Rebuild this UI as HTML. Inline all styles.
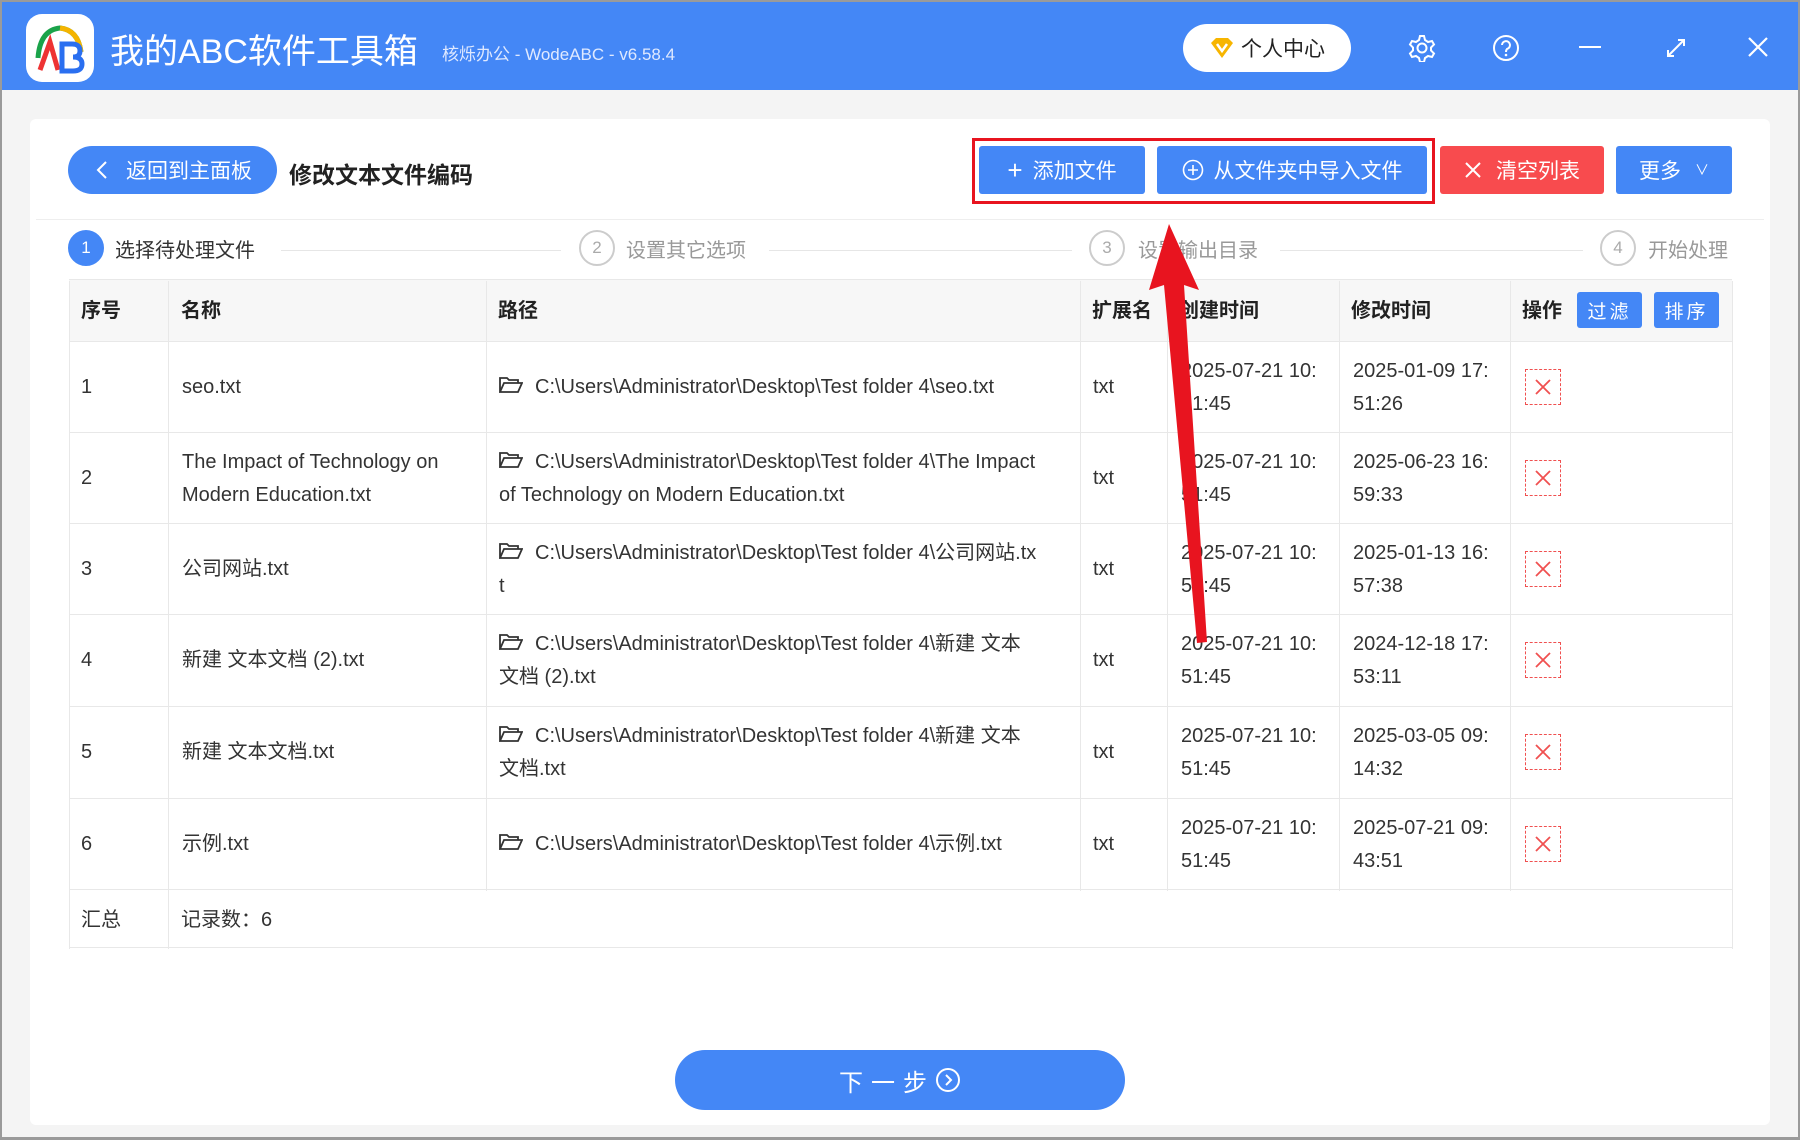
<!DOCTYPE html>
<html><head><meta charset="utf-8"><style>
*{margin:0;padding:0;box-sizing:border-box}
body{width:1800px;height:1140px;overflow:hidden;background:#9a9a9a;font-family:"Liberation Sans","Noto Sans CJK SC",sans-serif;position:relative}
.win{position:absolute;left:2px;top:2px;width:1796px;height:1135px;background:#f4f4f4}
.hdr{position:absolute;left:0;top:0;width:1796px;height:88px;background:#4487f6}
.a{position:absolute}
.card{position:absolute;left:28px;top:117px;width:1740px;height:1006px;background:#fff;border-radius:6px}
.btn{position:absolute;color:#fff;font-size:21px;display:flex;align-items:center;justify-content:center;border-radius:3px}
.blue{background:#4487f6}
.circ{position:absolute;width:36px;height:36px;border-radius:50%;border:2px solid #ccc;color:#aaa;font-size:17px;display:flex;align-items:center;justify-content:center}
.st{position:absolute;font-size:20px;color:#999;top:232px}
.ln{position:absolute;height:1px;background:#e6e6e6;top:248px}
.cell{position:absolute;font-size:20px;color:#333;line-height:33px;display:flex;align-items:center}
.th{font-weight:bold;color:#222}
.hl{position:absolute;height:1px;background:#e8e8e8;left:69px;width:1663px}
.vl{position:absolute;width:1px;background:#e8e8e8;top:279px;height:610px}
.del{position:absolute;width:36px;height:36px;border:1px dashed #f05050;left:1523px}
</style></head><body>
<div class="win">
<div class="hdr">
 <div class="a" style="left:24px;top:12px;width:68px;height:68px;background:#fff;border-radius:16px"></div>
 <svg class="a" style="left:24px;top:12px" width="68" height="68" viewBox="0 0 68 68">
  <path d="M12 44 Q14 16 34 14 Q52 16 55 38" fill="none" stroke="#1aa34a" stroke-width="5"/>
  <path d="M34 14 Q52 16 55 38" fill="none" stroke="#f5b400" stroke-width="5"/>
  <path d="M14 56 L24 28 L32 56" fill="none" stroke="#e33" stroke-width="5"/>
  <path d="M36 30 h10 q8 0 8 7 q0 6 -7 6 q9 0 9 7 q0 7 -9 7 h-11z" fill="none" stroke="#2a6ff0" stroke-width="5"/>
 </svg>
 <div class="a" style="left:108px;top:22px;font-size:34px;color:#fff">我的ABC软件工具箱</div>
 <div class="a" style="left:440px;top:38px;font-size:17px;color:#dfe9ff">核烁办公 - WodeABC - v6.58.4</div>
 <div class="a" style="left:1181px;top:22px;width:168px;height:48px;background:#fff;border-radius:24px;font-size:21px;color:#222;display:flex;align-items:center;justify-content:center;gap:6px"><svg width="26" height="24" viewBox="0 0 26 24"><path d="M2 7 L7 2 H19 L24 7 L13 22Z" fill="#f7b500"/><path d="M8 8 L13 15 L18 8" stroke="#fff" stroke-width="2.5" fill="none"/></svg>个人中心</div>
 <svg class="a" style="left:1406px;top:32px" width="28" height="28" viewBox="0 0 28 28"><circle cx="14" cy="14" r="4.5" fill="none" stroke="#fff" stroke-width="2"/><path d="M12 2h4l1 4 3 2 4-1 2 3.5-3 3v3l3 3-2 3.5-4-1-3 2-1 4h-4l-1-4-3-2-4 1-2-3.5 3-3v-3l-3-3L4 7l4 1 3-2z" fill="none" stroke="#fff" stroke-width="2"/></svg>
 <svg class="a" style="left:1490px;top:32px" width="28" height="28" viewBox="0 0 28 28"><circle cx="14" cy="14" r="12" fill="none" stroke="#fff" stroke-width="2"/><path d="M10 11a4 4 0 1 1 5 4q-1 1-1 3" fill="none" stroke="#fff" stroke-width="2"/><circle cx="14" cy="21" r="1.3" fill="#fff"/></svg>
 <div class="a" style="left:1577px;top:44px;width:22px;height:2px;background:#fff"></div>
 <svg class="a" style="left:1662px;top:34px" width="24" height="24" viewBox="0 0 24 24"><path d="M4 20 L20 4 M14 4h6v6 M4 14v6h6" fill="none" stroke="#fff" stroke-width="2"/></svg>
 <svg class="a" style="left:1745px;top:34px" width="22" height="22" viewBox="0 0 22 22"><path d="M2 2L20 20M20 2L2 20" stroke="#fff" stroke-width="2.2"/></svg>
</div>
<div class="card"></div>
<div class="a" style="left:34px;top:217px;width:1728px;height:1px;background:#eee"></div>
<div class="btn blue" style="left:66px;top:144px;width:209px;height:48px;border-radius:24px;justify-content:flex-start;padding-left:28px"><svg width="12" height="20" viewBox="0 0 12 20" style="margin-right:18px"><path d="M10 2L2 10l8 8" fill="none" stroke="#fff" stroke-width="2"/></svg>返回到主面板</div>
<div class="a" style="left:287px;top:154px;font-size:23px;font-weight:bold;color:#222">修改文本文件编码</div>
<div class="a" style="left:970px;top:136px;width:463px;height:66px;border:3px solid #e8141f"></div>
<div class="btn blue" style="left:977px;top:144px;width:166px;height:48px"><span style="font-size:26px;margin-right:10px;font-weight:300">+</span>添加文件</div>
<div class="btn blue" style="left:1155px;top:144px;width:270px;height:48px"><svg width="22" height="22" viewBox="0 0 22 22" style="margin-right:10px"><circle cx="11" cy="11" r="9.5" fill="none" stroke="#fff" stroke-width="1.6"/><path d="M11 6v10M6 11h10" stroke="#fff" stroke-width="1.6"/></svg>从文件夹中导入文件</div>
<div class="btn" style="left:1438px;top:144px;width:164px;height:48px;background:#f84b4e"><svg width="18" height="18" viewBox="0 0 18 18" style="margin-right:14px"><path d="M2 2L16 16M16 2L2 16" stroke="#fff" stroke-width="2"/></svg>清空列表</div>
<div class="btn blue" style="left:1614px;top:144px;width:116px;height:48px">更多<span style="font-size:14px;margin-left:14px">&#8744;</span></div>
<div class="circ" style="left:66px;top:228px;background:#4487f6;border-color:#4487f6;color:#fff">1</div>
<div class="st" style="left:113px;color:#333">选择待处理文件</div>
<div class="ln" style="left:279px;width:280px"></div>
<div class="circ" style="left:577px;top:228px">2</div>
<div class="st" style="left:624px">设置其它选项</div>
<div class="ln" style="left:767px;width:303px"></div>
<div class="circ" style="left:1087px;top:228px">3</div>
<div class="st" style="left:1136px">设置输出目录</div>
<div class="ln" style="left:1278px;width:303px"></div>
<div class="circ" style="left:1598px;top:228px">4</div>
<div class="st" style="left:1646px">开始处理</div>

<div class="a" style="left:67px;top:277px;width:1663px;height:62px;background:#f7f7f7"></div>
<div class="hl" style="top:277px;left:67px"></div><div class="hl" style="top:339px;left:67px"></div><div class="hl" style="top:430px;left:67px"></div><div class="hl" style="top:521px;left:67px"></div><div class="hl" style="top:612px;left:67px"></div><div class="hl" style="top:704px;left:67px"></div><div class="hl" style="top:796px;left:67px"></div><div class="hl" style="top:887px;left:67px"></div><div class="hl" style="top:945px;left:67px"></div>
<div class="vl" style="left:67px;height:668px"></div><div class="vl" style="left:166px;height:668px"></div><div class="vl" style="left:484px"></div><div class="vl" style="left:1078px"></div><div class="vl" style="left:1165px"></div><div class="vl" style="left:1337px"></div><div class="vl" style="left:1508px"></div><div class="vl" style="left:1730px;height:668px"></div>

<div class="cell th" style="left:79px;top:293px">序号</div>
<div class="cell th" style="left:179px;top:293px">名称</div>
<div class="cell th" style="left:496px;top:293px">路径</div>
<div class="cell th" style="left:1090px;top:293px">扩展名</div>
<div class="cell th" style="left:1177px;top:293px">创建时间</div>
<div class="cell th" style="left:1349px;top:293px">修改时间</div>
<div class="cell th" style="left:1520px;top:293px">操作</div>
<div class="btn blue" style="left:1575px;top:290px;width:65px;height:36px;font-size:19px;letter-spacing:3px">过滤</div>
<div class="btn blue" style="left:1652px;top:290px;width:65px;height:36px;font-size:19px;letter-spacing:3px">排序</div>

<div id="rows"></div>
<div class="cell" style="left:79px;top:902px">汇总</div>
<div class="cell" style="left:179px;top:902px">记录数：6</div>

<div class="btn blue" style="left:673px;top:1048px;width:450px;height:60px;border-radius:30px;font-size:24px;letter-spacing:8px">下一步<svg width="26" height="26" viewBox="0 0 26 26"><circle cx="13" cy="13" r="11" fill="none" stroke="#fff" stroke-width="2"/><path d="M11 8l5 5-5 5" fill="none" stroke="#fff" stroke-width="2"/></svg></div>
</div>

<svg class="a" style="left:0;top:0;pointer-events:none" width="1800" height="1140">
<polygon points="1197,643 1207,642 1184,285 1199,290 1169,224 1149,290 1164,285" fill="#e8141f"/>
</svg>
<script>
var R=[["1","seo.txt","C:\\Users\\Administrator\\Desktop\\Test folder 4\\seo.txt","2025-07-21 10:<br>51:45","2025-01-09 17:<br>51:26"],
["2","The Impact of Technology on<br>Modern Education.txt","C:\\Users\\Administrator\\Desktop\\Test folder 4\\The Impact<br>of Technology on Modern Education.txt","2025-07-21 10:<br>51:45","2025-06-23 16:<br>59:33"],
["3","公司网站.txt","C:\\Users\\Administrator\\Desktop\\Test folder 4\\公司网站.tx<br>t","2025-07-21 10:<br>51:45","2025-01-13 16:<br>57:38"],
["4","新建 文本文档 (2).txt","C:\\Users\\Administrator\\Desktop\\Test folder 4\\新建 文本<br>文档 (2).txt","2025-07-21 10:<br>51:45","2024-12-18 17:<br>53:11"],
["5","新建 文本文档.txt","C:\\Users\\Administrator\\Desktop\\Test folder 4\\新建 文本<br>文档.txt","2025-07-21 10:<br>51:45","2025-03-05 09:<br>14:32"],
["6","示例.txt","C:\\Users\\Administrator\\Desktop\\Test folder 4\\示例.txt","2025-07-21 10:<br>51:45","2025-07-21 09:<br>43:51"]];
var tops=[339,430,521,612,704,796],h="";
var fold='<svg width="24" height="18" viewBox="0 0 24 18" style="margin-right:12px;vertical-align:-1px"><path d="M1 16V2h7l2 2h9v3 M1 16l4-9h18l-4 9z" fill="none" stroke="#333" stroke-width="1.8"/></svg>';
R.forEach(function(r,i){var t=tops[i]+1,H=91;
function c(l,w,s){h+='<div class="cell" style="left:'+l+'px;top:'+t+'px;height:'+H+'px;width:'+w+'px"><div>'+s+'</div></div>';}
c(79,80,r[0]);c(180,300,r[1]);c(497,580,fold+r[2]);c(1091,70,"txt");c(1179,160,r[3]);c(1351,160,r[4]);
h+='<div class="del" style="top:'+(t+27)+'px"><svg width="34" height="34" viewBox="0 0 34 34"><path d="M10 10L24 24M24 10L10 24" stroke="#f05050" stroke-width="1.8"/></svg></div>';});
document.getElementById("rows").innerHTML=h;
</script>
</body></html>
